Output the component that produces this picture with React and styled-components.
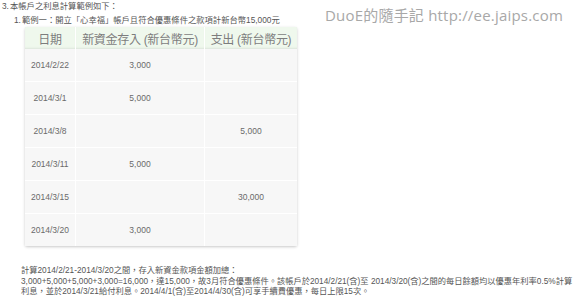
import React from 'react';
import styled, { createGlobalStyle } from 'styled-components';

const GlobalStyle = createGlobalStyle`
  html, body {
    margin: 0;
    padding: 0;
    background: #fff;
  }
  body {
    width: 580px;
    height: 300px;
    overflow: hidden;
    font-family: "Liberation Sans", "Noto Sans CJK TC", sans-serif;
    color: #555;
  }
`;

const Page = styled.div`
  position: relative;
  width: 580px;
  height: 300px;
  padding: 1px 0 0 2px;
  box-sizing: border-box;
`;

const Watermark = styled.div`
  position: absolute;
  top: 4px;
  left: 325px;
  font-family: "Open Sans", "Noto Sans CJK TC", sans-serif;
  font-size: 15px;
  letter-spacing: 0.2px;
  color: #a8a8a8;
  white-space: nowrap;
`;

const ListItem = styled.div`
  display: flex;
  align-items: flex-start;
  font-size: 8.3px;
  line-height: 11px;
  padding-left: ${({ indent }) => indent || 0}px;
  margin-top: ${({ top }) => top || 0}px;
`;

const Marker = styled.span`
  width: ${({ w }) => w}px;
  flex: none;
`;

const TableWrap = styled.div`
  margin: 1px 0 0 23px;
  width: 272px;
  box-shadow: 0 1px 3px rgba(0, 0, 0, 0.22);
  border-radius: 2px;
`;

const Table = styled.table`
  width: 272px;
  border-collapse: separate;
  border-spacing: 0;
  table-layout: fixed;
`;

const HeadCell = styled.th`
  height: 22px;
  padding: 0;
  font-weight: normal;
  font-size: 12px;
  color: #7d7d7d;
  background: #eff8ed;
  border-left: ${({ first }) => (first ? 'none' : '1px solid #fff')};
  box-shadow: inset 0 -2px 2px -1px rgba(0, 0, 0, 0.08);
  text-align: center;
  white-space: nowrap;
  letter-spacing: -0.3px;
`;

const Cell = styled.td`
  height: 32px;
  padding: 0;
  font-size: 8.5px;
  color: #6a6a6a;
  background: #f7f7f7;
  text-align: center;
  border-left: ${({ first }) => (first ? 'none' : '1px solid #fff')};
  border-top: ${({ top }) => (top ? 'none' : '1px solid #fff')};
`;

const Notes = styled.div`
  margin: 20px 0 0 19px;
  font-size: 8.25px;
  line-height: 10.7px;
  color: #555;
  white-space: nowrap;
`;

const rows = [
  ['2014/2/22', '3,000', ''],
  ['2014/3/1', '5,000', ''],
  ['2014/3/8', '', '5,000'],
  ['2014/3/11', '5,000', ''],
  ['2014/3/15', '', '30,000'],
  ['2014/3/20', '3,000', ''],
];

export default function App() {
  return (
    <Page>
      <GlobalStyle />
      <Watermark>DuoE的隨手記 http://ee.jaips.com</Watermark>
      <ListItem>
        <Marker w={8}>3.</Marker>
        <span>本帳戶之利息計算範例如下：</span>
      </ListItem>
      <ListItem indent={12} top={3}>
        <Marker w={8}>1.</Marker>
        <span>範例一：開立「心幸福」帳戶且符合優惠條件之款項計新台幣15,000元</span>
      </ListItem>
      <TableWrap>
        <Table>
          <colgroup>
            <col style={{ width: 50 }} />
            <col style={{ width: 129 }} />
            <col style={{ width: 93 }} />
          </colgroup>
          <thead>
            <tr>
              <HeadCell first>日期</HeadCell>
              <HeadCell>新資金存入 (新台幣元)</HeadCell>
              <HeadCell>支出 (新台幣元)</HeadCell>
            </tr>
          </thead>
          <tbody>
            {rows.map((r, i) => (
              <tr key={i}>
                <Cell first top={i === 0}>{r[0]}</Cell>
                <Cell top={i === 0}>{r[1]}</Cell>
                <Cell top={i === 0}>{r[2]}</Cell>
              </tr>
            ))}
          </tbody>
        </Table>
      </TableWrap>
      <Notes>
        計算2014/2/21-2014/3/20之間，存入新資金款項金額加總：
        <br />
        3,000+5,000+5,000+3,000=16,000，達15,000，故3月符合優惠條件。該帳戶於2014/2/21(含)至 2014/3/20(含)之間的每日餘額均以優惠年利率0.5%計算
        <br />
        利息，並於2014/3/21給付利息。2014/4/1(含)至2014/4/30(含)可享手續費優惠，每日上限15次。
      </Notes>
    </Page>
  );
}
